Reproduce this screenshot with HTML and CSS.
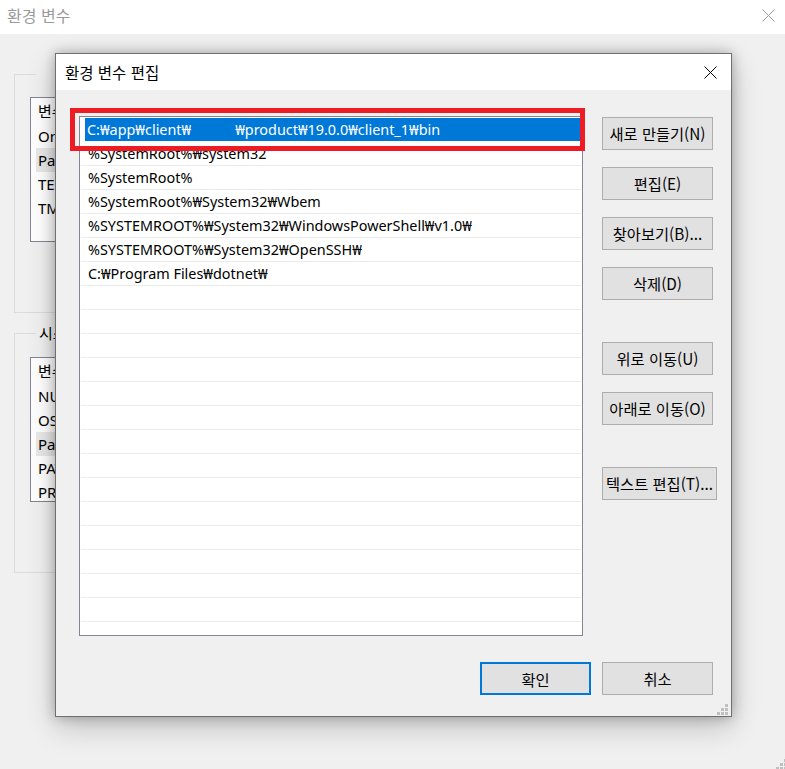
FILE: index.html
```html
<!DOCTYPE html>
<html lang="ko">
<head>
<meta charset="utf-8">
<title>환경 변수 편집</title>
<link rel="stylesheet" href="styles.css">
</head>
<body>
<div class="bg-window">
  <div class="bg-titlebar">
    <span class="bg-title">환경 변수</span>
    <svg class="bg-close" width="13" height="13" viewBox="0 0 13 13"><path d="M0.5 0.5L12.5 12.5M12.5 0.5L0.5 12.5" stroke="#9a9a9a" stroke-width="1"/></svg>
  </div>
  <div class="bg-body">
    <fieldset class="group group-user">
      <legend class="blank-legend"></legend>
      <div class="var-list">
        <div class="var-head">변수</div>
        <div class="var-row">OneDrive</div>
        <div class="var-row hl">Path</div>
        <div class="var-row">TEMP</div>
        <div class="var-row">TMP</div>
      </div>
    </fieldset>
    <fieldset class="group group-sys">
      <legend>시스템 변수(S)</legend>
      <div class="var-list">
        <div class="var-head">변수</div>
        <div class="var-row">NUMBER_OF_PROCESSORS</div>
        <div class="var-row">OS</div>
        <div class="var-row hl">Path</div>
        <div class="var-row">PATHEXT</div>
        <div class="var-row">PROCESSOR_ARCHITECTURE</div>
      </div>
    </fieldset>
  </div>
</div>

<svg class="page-grip" width="11" height="11" viewBox="0 0 11 11"><g fill="#bfbfbf"><rect x="8" y="0" width="3" height="3"/><rect x="4" y="4" width="3" height="3"/><rect x="8" y="4" width="3" height="3"/><rect x="0" y="8" width="3" height="3"/><rect x="4" y="8" width="3" height="3"/><rect x="8" y="8" width="3" height="3"/></g></svg>

<div class="dialog">
  <div class="dlg-titlebar">
    <span class="dlg-title">환경 변수 편집</span>
    <svg class="dlg-close" width="13" height="13" viewBox="0 0 13 13"><path d="M0.5 0.5L12.5 12.5M12.5 0.5L0.5 12.5" stroke="#000" stroke-width="1"/></svg>
  </div>
  <div class="dlg-body">
    <div class="path-list">
      <div class="path-row selected"><span class="sel-box">C:₩app₩client₩<span class="gap"></span>₩product₩19.0.0₩client_1₩bin</span></div>
      <div class="path-row">%SystemRoot%₩system32</div>
      <div class="path-row">%SystemRoot%</div>
      <div class="path-row">%SystemRoot%₩System32₩Wbem</div>
      <div class="path-row">%SYSTEMROOT%₩System32₩WindowsPowerShell₩v1.0₩</div>
      <div class="path-row">%SYSTEMROOT%₩System32₩OpenSSH₩</div>
      <div class="path-row">C:₩Program Files₩dotnet₩</div>
      <div class="path-row"></div>
      <div class="path-row"></div>
      <div class="path-row"></div>
      <div class="path-row"></div>
      <div class="path-row"></div>
      <div class="path-row"></div>
      <div class="path-row"></div>
      <div class="path-row"></div>
      <div class="path-row"></div>
      <div class="path-row"></div>
      <div class="path-row"></div>
      <div class="path-row"></div>
      <div class="path-row"></div>
      <div class="path-row"></div>
      <div class="path-row"></div>
    </div>
    <div class="btn-col">
      <button class="btn">새로 만들기(N)</button>
      <button class="btn">편집(E)</button>
      <button class="btn">찾아보기(B)...</button>
      <button class="btn">삭제(D)</button>
      <button class="btn spaced">위로 이동(U)</button>
      <button class="btn">아래로 이동(O)</button>
      <button class="btn wide spaced">텍스트 편집(T)...</button>
    </div>
    <div class="dlg-footer">
      <button class="btn default">확인</button>
      <button class="btn">취소</button>
    </div>
  </div>
  <svg class="dlg-grip" width="11" height="11" viewBox="0 0 11 11"><g fill="#bfbfbf"><rect x="8" y="0" width="3" height="3"/><rect x="4" y="4" width="3" height="3"/><rect x="8" y="4" width="3" height="3"/><rect x="0" y="8" width="3" height="3"/><rect x="4" y="8" width="3" height="3"/><rect x="8" y="8" width="3" height="3"/></g></svg>
</div>

<div class="annotation"></div>
</body>
</html>
```

FILE: styles.css
```css
* {
  box-sizing: border-box;
}

html,
body {
  margin: 0;
  padding: 0;
}

body {
  width: 785px;
  height: 769px;
  overflow: hidden;
  position: relative;
  background: #f0f0f0;
  color: #000;
  font-family: "Noto Sans", "Noto Sans CJK KR", sans-serif;
  font-size: 14.4px;
}

/* ---------- background window ---------- */
.bg-titlebar {
  height: 34px;
  background: #fff;
  display: flex;
  justify-content: space-between;
  align-items: flex-start;
  padding: 0 10px 0 7px;
}

.bg-title {
  font-family: "Noto Sans CJK KR", sans-serif;
  font-size: 16px;
  line-height: 31px;
  color: #9a9a9a;
}

.bg-close {
  margin-top: 9px;
}

.bg-body {
  padding-left: 14px;
}

.group {
  margin: 0;
  border: 1px solid #dcdcdc;
  padding: 13px 0 70px 15px;
  width: 640px;
  min-inline-size: 0;
}

.group legend {
  margin-left: 6px;
  padding: 0 3px;
  height: 20px;
  line-height: 20px;
  font-family: "Noto Sans CJK KR", sans-serif;
  font-size: 15px;
}

.group .blank-legend {
  width: 40px;
}

.group-user {
  margin-top: 30px;
}

.group-sys {
  margin-top: 10px;
  padding-top: 14px;
}

.var-list {
  height: 145px;
  margin-right: 15px;
  background: #fff;
  border: 1px solid #828790;
  overflow: hidden;
}

.var-head {
  height: 26px;
  line-height: 26px;
  padding-left: 7px;
  font-family: "Noto Sans CJK KR", sans-serif;
  font-size: 15px;
}

.var-row {
  height: 24px;
  line-height: 24px;
  padding-left: 7px;
  font-size: 15px;
}

.var-row.hl {
  margin-left: 5px;
  padding-left: 2px;
  background: #e9e9e9;
}

.page-grip {
  position: absolute;
  left: 776px;
  top: 759px;
}

/* ---------- dialog ---------- */
.dialog {
  position: absolute;
  left: 55px;
  top: 53px;
  width: 677px;
  height: 664px;
  border: 1px solid #6f6f6f;
  background: #f0f0f0;
  box-shadow: 0 0 12px rgba(0, 0, 0, 0.28), 0 10px 28px rgba(0, 0, 0, 0.2);
  display: flex;
  flex-direction: column;
}

.dlg-titlebar {
  height: 36px;
  flex: none;
  background: #fff;
  display: flex;
  align-items: center;
  justify-content: space-between;
  padding: 0 14px 0 9px;
}

.dlg-title {
  font-family: "Noto Sans CJK KR", sans-serif;
  font-size: 15.5px;
}

.dlg-body {
  display: grid;
  grid-template-columns: 504px 111px;
  column-gap: 19px;
  padding: 26px 18px 0 23px;
}

.path-list {
  height: 520px;
  background: #fff;
  border: 1px solid #828790;
  padding: 1px 1px 0;
  overflow: hidden;
}

.path-row {
  height: 24px;
  line-height: 23px;
  border-bottom: 1px solid #ececec;
  padding-left: 7px;
  white-space: nowrap;
}

.path-row.selected {
  padding-left: 4px;
  border-bottom-color: #fff;
}

.sel-box {
  display: block;
  height: 23px;
  padding-left: 2px;
  background: #0078d7;
  color: #fff;
}

.gap {
  display: inline-block;
  width: 44px;
}

.btn-col {
  display: flex;
  flex-direction: column;
  align-items: flex-start;
  gap: 17px;
  margin-top: 1px;
}

.btn-col .spaced {
  margin-top: 25px;
}

.btn {
  width: 111px;
  height: 33px;
  padding: 0;
  margin: 0;
  background: #e1e1e1;
  border: 1px solid #adadad;
  border-radius: 0;
  color: #000;
  font-family: "Noto Sans CJK KR", sans-serif;
  font-size: 15.3px;
  line-height: 31px;
  white-space: nowrap;
}

.btn.wide {
  width: 115px;
}

.btn.default {
  border: 2px solid #0078d7;
}

.dlg-footer {
  grid-column: 1 / -1;
  display: flex;
  justify-content: flex-end;
  gap: 11px;
  margin-top: 26px;
}

.dlg-grip {
  position: absolute;
  right: 3px;
  bottom: 1px;
}

/* ---------- red annotation ---------- */
.annotation {
  position: absolute;
  left: 70px;
  top: 108px;
  width: 515px;
  height: 43px;
  border: 5px solid #ed1c24;
}
```
